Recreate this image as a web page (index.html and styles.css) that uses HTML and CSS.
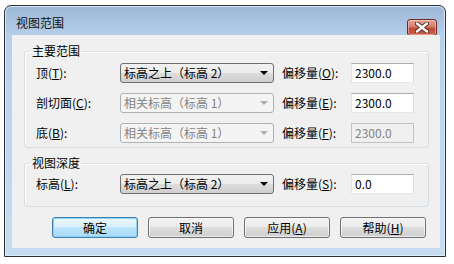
FILE: index.html
```html
<!DOCTYPE html>
<html lang="zh-CN">
<head>
    <meta charset="UTF-8">
    <title>视图范围</title>
    <link rel="stylesheet" href="styles.css">
</head>
<body>
<div class="window">
    <div class="titlebar">
        <span class="title">视图范围</span>
        <button class="close" aria-label="关闭">
            <svg width="14" height="11" viewBox="0 0 14 11">
                <path d="M2 1.5 L12 9.5 M12 1.5 L2 9.5" stroke="#5a2a24" stroke-width="4.2" stroke-linecap="round"/>
                <path d="M2 1.5 L12 9.5 M12 1.5 L2 9.5" stroke="#fff" stroke-width="2.4" stroke-linecap="round"/>
            </svg>
        </button>
    </div>
    <div class="client">
        <fieldset class="group">
            <legend>主要范围</legend>
            <div class="rows">
                <span class="label">顶(<u>T</u>):</span>
                <div class="combo"><span>标高之上（标高 2）</span><i class="arrow"></i></div>
                <span class="label">偏移量(<u>O</u>):</span>
                <div class="edit">2300.0</div>

                <span class="label">剖切面(<u>C</u>):</span>
                <div class="combo disabled"><span>相关标高（标高 1）</span><i class="arrow"></i></div>
                <span class="label">偏移量(<u>E</u>):</span>
                <div class="edit">2300.0</div>

                <span class="label">底(<u>B</u>):</span>
                <div class="combo disabled"><span>相关标高（标高 1）</span><i class="arrow"></i></div>
                <span class="label">偏移量(<u>F</u>):</span>
                <div class="edit disabled">2300.0</div>
            </div>
        </fieldset>

        <fieldset class="group depth">
            <legend>视图深度</legend>
            <div class="rows">
                <span class="label">标高(<u>L</u>):</span>
                <div class="combo"><span>标高之上（标高 2）</span><i class="arrow"></i></div>
                <span class="label">偏移量(<u>S</u>):</span>
                <div class="edit">0.0</div>
            </div>
        </fieldset>

        <div class="buttons">
            <button class="btn default">确定</button>
            <button class="btn">取消</button>
            <button class="btn">应用(<u>A</u>)</button>
            <button class="btn">帮助(<u>H</u>)</button>
        </div>
    </div>
</div>
</body>
</html>
```
FILE: styles.css
```css
* {
    box-sizing: border-box;
}
body {
    margin: 0;
    background: #fff;
    font: 12px/14px "Noto Sans CJK SC", sans-serif;
    color: #000;
}

.window {
    width: 442px;
    height: 252px;
    margin: 5px 0 0 4px;
    border: 1px solid #2b2f36;
    border-radius: 7px 7px 0 0;
    padding: 0 5px 8px 7px;
    background: linear-gradient(#9cb7d7, #b6cfea 30px, #bed6ee 120px, #c6dcf1);
    box-shadow: inset 0 0 0 1px #dce9f6;
    display: flex;
    flex-direction: column;
}

.titlebar {
    height: 29px;
    display: flex;
    align-items: center;
    justify-content: space-between;
    padding: 4px 3px 0 4px;
}
.title {
    font-size: 12px;
    color: #111;
}
.close {
    align-self: flex-start;
    margin-top: 9px;
    width: 30px;
    height: 17px;
    padding: 0;
    border: 1px solid #6e2b25;
    border-radius: 3px;
    background: linear-gradient(#e6a596, #d47a68 45%, #c04a35 55%, #c95e48);
    box-shadow: inset 0 0 0 1px rgba(255, 220, 210, 0.5);
    display: flex;
    align-items: center;
    justify-content: center;
}

.client {
    height: 213px;
    background: #f0f0f0;
    padding: 9px 11px 0 12px;
}

.group {
    margin: 0;
    padding: 0;
    border: 1px solid #d5dfe5;
    border-radius: 3px;
    box-shadow: inset 1px 1px 0 #fff;
}
.group legend {
    margin-left: 5px;
    padding: 0 2px;
    line-height: 14px;
}
.rows {
    display: grid;
    grid-template-columns: 84px 162px 69px 63px;
    grid-auto-rows: 20px;
    row-gap: 10px;
    align-items: center;
    padding: 5px 0 4px 11px;
}
.depth {
    margin-top: 8px;
}
.depth .rows {
    padding: 4px 0 12px 11px;
}

.label {
    white-space: nowrap;
}

.combo {
    width: 154px;
    height: 20px;
    border: 1px solid #707070;
    border-radius: 3px;
    background: linear-gradient(#f2f2f2, #ebebeb 50%, #dddddd 50%, #cfcfcf);
    display: flex;
    align-items: center;
    justify-content: space-between;
    padding: 0 5px 0 3px;
}
.arrow {
    width: 0;
    height: 0;
    border-left: 4px solid transparent;
    border-right: 4px solid transparent;
    border-top: 4px solid #000;
}
.combo.disabled {
    border-color: #adb2b5;
    background: #f4f4f4;
    color: #838383;
}
.combo.disabled .arrow {
    border-top-color: #b0b0b0;
}

.edit {
    height: 20px;
    border: 1px solid;
    border-color: #abadb3 #dbdfe6 #e3e9ef #e2e3ea;
    background: #fff;
    padding-left: 3px;
    line-height: 18px;
}
.edit.disabled {
    background: #f0f0f0;
    border-color: #c2c2c2;
    color: #838383;
}

.buttons {
    display: flex;
    gap: 10px;
    margin: 10px 0 0 28px;
}
.btn {
    width: 86px;
    height: 21px;
    padding: 0;
    font: inherit;
    color: #000;
    border: 1px solid #707070;
    border-radius: 3px;
    background: linear-gradient(#f2f2f2, #ebebeb 50%, #dddddd 50%, #cfcfcf);
    box-shadow: inset 0 0 0 1px rgba(255, 255, 255, 0.6);
}
.btn.default {
    border-color: #3c7fb1;
    background: linear-gradient(#eaf6fd, #d9f0fc 50%, #bee6fd 50%, #a7d9f5);
    box-shadow: inset 0 0 0 1px #8fd3f4;
}
```
